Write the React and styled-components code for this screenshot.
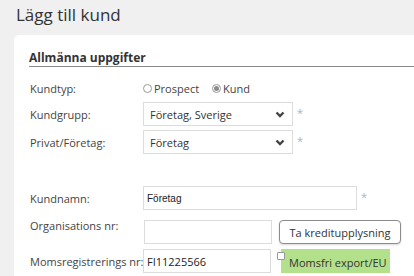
import React from 'react';
import styled, { createGlobalStyle } from 'styled-components';

const Global = createGlobalStyle`
  html, body { margin: 0; padding: 0; background: #f0f0f0; overflow: hidden; }
  body { font-family: "Open Sans", sans-serif; color: #444; }
  * { box-sizing: border-box; }
`;

const Page = styled.div`
  width: 414px;
  height: 276px;
  overflow: hidden;
  background: #f0f0f0;
  padding-left: 14px;
`;

const Title = styled.h1`
  margin: 0;
  height: 35px;
  padding: 3px 0 0 2px;
  font-size: 17px;
  font-weight: 400;
  line-height: 24px;
  color: #333;
`;

const Panel = styled.div`
  width: 420px;
  height: 260px;
  background: #fff;
  border-radius: 5px 0 0 0;
  padding: 14px 0 0 15px;
`;

const SectionTitle = styled.h2`
  margin: 0;
  height: 18px;
  font-size: 12px;
  font-weight: 700;
  line-height: 17px;
  color: #333;
  border-bottom: 1px solid #8a8a8a;
`;

const Form = styled.div`
  display: flex;
  flex-direction: column;
  padding-left: 1px;
`;

const Row = styled.div`
  display: grid;
  grid-template-columns: 113px auto;
  align-items: ${p => (p.$top ? 'start' : 'center')};
  margin-top: ${p => p.$mt}px;
  height: ${p => p.$h}px;
`;

const Label = styled.div`
  font-size: 11px;
  line-height: ${p => p.$lh || 15}px;
  color: #444;
  white-space: nowrap;
`;

const Field = styled.div`
  display: flex;
  align-items: center;
`;

const RadioGroup = styled.div`
  display: flex;
  align-items: center;
  font-size: 11px;
  color: #444;
`;

const RadioItem = styled.label`
  display: flex;
  align-items: center;
  margin-right: ${p => p.$mr || 0}px;
`;

const RadioCircle = styled.span`
  width: 9px;
  height: 9px;
  border-radius: 50%;
  border: 1px solid #999;
  background: #fff;
  margin-right: 2px;
  display: flex;
  align-items: center;
  justify-content: center;
  &::after {
    content: "";
    width: 5px;
    height: 5px;
    border-radius: 50%;
    background: ${p => (p.$checked ? '#8a8a8a' : 'transparent')};
  }
`;

const SelectBox = styled.div`
  width: 150px;
  height: 24px;
  border: 1px solid #dcdcdc;
  background: #fff;
  display: flex;
  align-items: center;
  justify-content: space-between;
  padding: 0 7px 0 6px;
  font-size: 11px;
  color: #333;
`;

const Required = styled.span`
  margin-left: 4px;
  font-size: 11px;
  color: #b0b4bb;
  line-height: 1;
  align-self: flex-start;
  margin-top: 5px;
`;

const TextInput = styled.div`
  width: ${p => p.$w}px;
  height: 24px;
  border: 1px solid #dcdcdc;
  background: #fff;
  display: flex;
  align-items: center;
  padding-left: 3px;
  margin-left: ${p => p.$ml || 0}px;
  font-family: ${p => (p.$arial ? '"Liberation Sans", Arial, sans-serif' : '"Open Sans", sans-serif')};
  font-size: ${p => (p.$arial ? 10 : 11)}px;
  color: #222;
`;

const Button = styled.button`
  margin-left: 7px;
  width: 122px;
  height: 24px;
  border: 1px solid #8c8c8c;
  border-radius: 4px;
  background: #fff;
  box-shadow: 0 1px 2px rgba(0, 0, 0, 0.15);
  font-family: "Open Sans", sans-serif;
  font-size: 11px;
  color: #333;
  padding: 0;
`;

const CheckWrap = styled.div`
  display: flex;
  align-items: flex-start;
  margin-left: 6px;
  height: 24px;
`;

const CheckBox = styled.span`
  position: relative;
  z-index: 1;
  width: 8px;
  height: 8px;
  margin-top: 3px;
  border: 1px solid #999;
  border-radius: 1px;
  background: #fff;
`;

const GreenLabel = styled.span`
  margin-left: -4px;
  width: 109px;
  height: 24px;
  background: #b3e08b;
  font-size: 11px;
  line-height: 15px;
  color: #333;
  padding: 6px 0 0 8px;
  white-space: nowrap;
`;

const Chevron = () => (
  <svg width="10" height="7" viewBox="0 0 10 7">
    <polyline points="1.5,1.5 5,5 8.5,1.5" fill="none" stroke="#444" strokeWidth="2.4" />
  </svg>
);

export default function App() {
  return (
    <>
      <Global />
      <Page>
        <Title>Lägg till kund</Title>
        <Panel>
          <SectionTitle>Allmänna uppgifter</SectionTitle>
          <Form>
            <Row $mt={11} $h={20}>
              <Label>Kundtyp:</Label>
              <RadioGroup>
                <RadioItem $mr={13}>
                  <RadioCircle />
                  Prospect
                </RadioItem>
                <RadioItem>
                  <RadioCircle $checked />
                  Kund
                </RadioItem>
              </RadioGroup>
            </Row>
            <Row $mt={4} $h={24}>
              <Label>Kundgrupp:</Label>
              <Field>
                <SelectBox>
                  Företag, Sverige
                  <Chevron />
                </SelectBox>
                <Required>*</Required>
              </Field>
            </Row>
            <Row $mt={4} $h={24}>
              <Label>Privat/Företag:</Label>
              <Field>
                <SelectBox>
                  Företag
                  <Chevron />
                </SelectBox>
                <Required>*</Required>
              </Field>
            </Row>
            <Row $mt={32} $h={24}>
              <Label>Kundnamn:</Label>
              <Field>
                <TextInput $w={214} $arial>Företag</TextInput>
                <Required>*</Required>
              </Field>
            </Row>
            <Row $mt={10} $h={24} $top>
              <Label $lh={12}>Organisations nr:</Label>
              <Field>
                <TextInput $w={128} $ml={1} />
                <Button>Ta kreditupplysning</Button>
              </Field>
            </Row>
            <Row $mt={5} $h={24}>
              <Label>Momsregistrerings nr:</Label>
              <Field>
                <TextInput $w={128}>FI11225566</TextInput>
                <CheckWrap>
                  <CheckBox />
                  <GreenLabel>Momsfri export/EU</GreenLabel>
                </CheckWrap>
              </Field>
            </Row>
          </Form>
        </Panel>
      </Page>
    </>
  );
}
